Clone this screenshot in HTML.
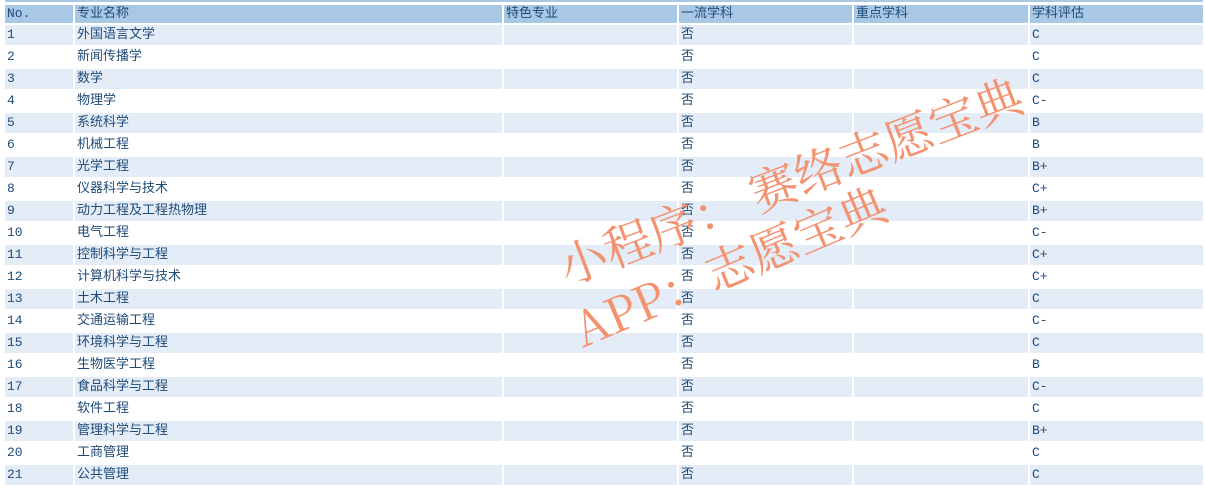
<!DOCTYPE html>
<html><head><meta charset="utf-8"><style>
html,body{margin:0;padding:0;width:1205px;height:488px;overflow:hidden}
body{background:#fff;position:relative;font-family:"Liberation Mono","Noto Sans CJK SC",monospace;font-size:13px;color:#1e4a78}
.r{position:absolute;left:0;width:1205px;height:20px}
.c{position:absolute;top:0;height:20px;line-height:20px;padding-left:2px;box-sizing:border-box;white-space:nowrap}
.s .c{background:#e4ecf7}
.h .c{background:#a8c8e6;height:18px;line-height:18px}
.c1{left:5px;width:68px}.c2{left:75px;width:427px}.c3{left:504px;width:173px}.c4{left:679px;width:173px}.c5{left:854px;width:174px}.c6{left:1030px;width:173px}
.wm{position:absolute;font-family:"Noto Serif CJK SC",serif;color:#f4916f;white-space:nowrap;transform-origin:left bottom}
</style></head><body>
<div style="position:absolute;left:5px;top:0;width:1198px;height:2px;background:#a8c8e6"></div>
<div class="r h" style="top:5px"><div class="c c1">No.</div><div class="c c2">专业名称</div><div class="c c3">特色专业</div><div class="c c4">一流学科</div><div class="c c5">重点学科</div><div class="c c6">学科评估</div></div>
<div class="r s" style="top:25px"><div class="c c1">1</div><div class="c c2">外国语言文学</div><div class="c c3"></div><div class="c c4">否</div><div class="c c5"></div><div class="c c6">C</div></div>
<div class="r" style="top:47px"><div class="c c1">2</div><div class="c c2">新闻传播学</div><div class="c c3"></div><div class="c c4">否</div><div class="c c5"></div><div class="c c6">C</div></div>
<div class="r s" style="top:69px"><div class="c c1">3</div><div class="c c2">数学</div><div class="c c3"></div><div class="c c4">否</div><div class="c c5"></div><div class="c c6">C</div></div>
<div class="r" style="top:91px"><div class="c c1">4</div><div class="c c2">物理学</div><div class="c c3"></div><div class="c c4">否</div><div class="c c5"></div><div class="c c6">C-</div></div>
<div class="r s" style="top:113px"><div class="c c1">5</div><div class="c c2">系统科学</div><div class="c c3"></div><div class="c c4">否</div><div class="c c5"></div><div class="c c6">B</div></div>
<div class="r" style="top:135px"><div class="c c1">6</div><div class="c c2">机械工程</div><div class="c c3"></div><div class="c c4">否</div><div class="c c5"></div><div class="c c6">B</div></div>
<div class="r s" style="top:157px"><div class="c c1">7</div><div class="c c2">光学工程</div><div class="c c3"></div><div class="c c4">否</div><div class="c c5"></div><div class="c c6">B+</div></div>
<div class="r" style="top:179px"><div class="c c1">8</div><div class="c c2">仪器科学与技术</div><div class="c c3"></div><div class="c c4">否</div><div class="c c5"></div><div class="c c6">C+</div></div>
<div class="r s" style="top:201px"><div class="c c1">9</div><div class="c c2">动力工程及工程热物理</div><div class="c c3"></div><div class="c c4">否</div><div class="c c5"></div><div class="c c6">B+</div></div>
<div class="r" style="top:223px"><div class="c c1">10</div><div class="c c2">电气工程</div><div class="c c3"></div><div class="c c4">否</div><div class="c c5"></div><div class="c c6">C-</div></div>
<div class="r s" style="top:245px"><div class="c c1">11</div><div class="c c2">控制科学与工程</div><div class="c c3"></div><div class="c c4">否</div><div class="c c5"></div><div class="c c6">C+</div></div>
<div class="r" style="top:267px"><div class="c c1">12</div><div class="c c2">计算机科学与技术</div><div class="c c3"></div><div class="c c4">否</div><div class="c c5"></div><div class="c c6">C+</div></div>
<div class="r s" style="top:289px"><div class="c c1">13</div><div class="c c2">土木工程</div><div class="c c3"></div><div class="c c4">否</div><div class="c c5"></div><div class="c c6">C</div></div>
<div class="r" style="top:311px"><div class="c c1">14</div><div class="c c2">交通运输工程</div><div class="c c3"></div><div class="c c4">否</div><div class="c c5"></div><div class="c c6">C-</div></div>
<div class="r s" style="top:333px"><div class="c c1">15</div><div class="c c2">环境科学与工程</div><div class="c c3"></div><div class="c c4">否</div><div class="c c5"></div><div class="c c6">C</div></div>
<div class="r" style="top:355px"><div class="c c1">16</div><div class="c c2">生物医学工程</div><div class="c c3"></div><div class="c c4">否</div><div class="c c5"></div><div class="c c6">B</div></div>
<div class="r s" style="top:377px"><div class="c c1">17</div><div class="c c2">食品科学与工程</div><div class="c c3"></div><div class="c c4">否</div><div class="c c5"></div><div class="c c6">C-</div></div>
<div class="r" style="top:399px"><div class="c c1">18</div><div class="c c2">软件工程</div><div class="c c3"></div><div class="c c4">否</div><div class="c c5"></div><div class="c c6">C</div></div>
<div class="r s" style="top:421px"><div class="c c1">19</div><div class="c c2">管理科学与工程</div><div class="c c3"></div><div class="c c4">否</div><div class="c c5"></div><div class="c c6">B+</div></div>
<div class="r" style="top:443px"><div class="c c1">20</div><div class="c c2">工商管理</div><div class="c c3"></div><div class="c c4">否</div><div class="c c5"></div><div class="c c6">C</div></div>
<div class="r s" style="top:465px"><div class="c c1">21</div><div class="c c2">公共管理</div><div class="c c3"></div><div class="c c4">否</div><div class="c c5"></div><div class="c c6">C</div></div>
<div class="wm" style="left:572px;top:230px;font-size:48px;transform:rotate(-21deg)">小程序：&nbsp;赛络志愿宝典</div>
<div class="wm" style="left:588px;top:292px;font-size:48px;transform:rotate(-23deg)">APP：志愿宝典</div>
</body></html>
